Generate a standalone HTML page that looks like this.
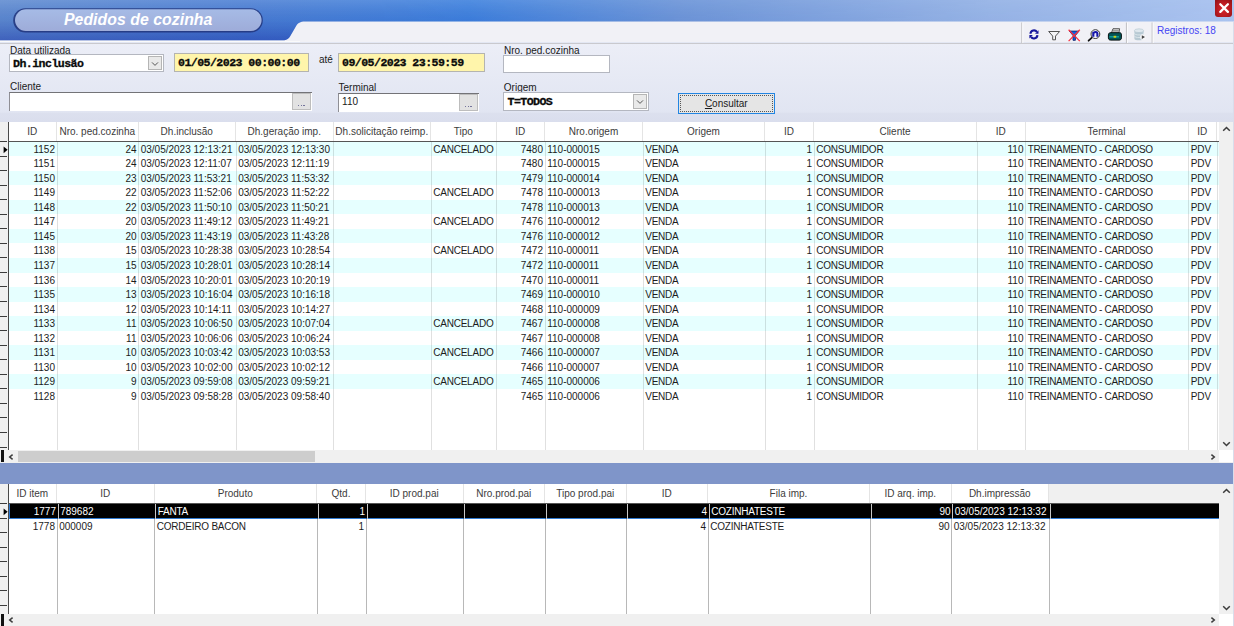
<!DOCTYPE html>
<html>
<head>
<meta charset="utf-8">
<title>Pedidos de cozinha</title>
<style>
*{box-sizing:border-box;margin:0;padding:0}
html,body{width:1234px;height:626px;overflow:hidden}
body{font-family:"Liberation Sans",sans-serif;font-size:10px;color:#222;background:#e3e7f3;position:relative}
.abs{position:absolute}
/* header */
#hdr{left:0;top:0;width:1234px;height:42px;overflow:hidden}
#title{left:64px;top:9.6px;font-size:15.8px;font-weight:bold;font-style:italic;color:#fff;white-space:nowrap;line-height:20px;letter-spacing:0.05px}
#closeb{left:1214.7px;top:0;width:17.8px;height:16.9px;background:radial-gradient(ellipse at 50% 55%,#d42228 0%,#c01c22 45%,#8e1217 100%);border-radius:0 0 3px 3px}
/* form */
#form{left:0;top:43px;width:1234px;height:79px;background:linear-gradient(#eceef7 0,#e1e5f2 69px,#dce0ee 70.5px,#dadeed 79px)}
.lbl{position:absolute;font-size:10px;line-height:11px;color:#1a1a1a;white-space:nowrap}
.inp{position:absolute;background:#fff;border:1px solid #c9ccd6;border-top:1.2px solid #6e6e72;border-left-color:#8c8c92}
.inp.cb{border:1px solid #b4b7c0}
.mono{font-family:"Liberation Mono",monospace;font-weight:bold;font-size:11.6px;letter-spacing:-0.56px;color:#0a0a0a;-webkit-text-stroke:0.3px #0a0a0a;white-space:nowrap;line-height:16px}
.inp.yel{background:#fff5ab;border:1px solid #b4b4b0}
.dd{position:absolute;right:1px;top:1px;bottom:1px;width:14px;background:#e9e9e9;border:1px solid #b5b5b5}
.dots{position:absolute;background:#e2e2e2;border:1px solid #bdbdbd}
.dots i{position:absolute;left:4.6px;top:10.6px;width:7px;height:1.2px;background:repeating-linear-gradient(90deg,#74749c 0,#74749c 1.5px,transparent 1.5px,transparent 2.75px)}
.inp.sk{border:none;border-top:1.1px solid #737377;border-left:1px solid #8f8f95}
/* grids */
.grid{position:absolute;left:0;width:1234px;background:#fff;overflow:hidden}
.ghead{position:absolute;left:0;top:0;height:20px;width:1219px;background:#fff;border-bottom:1px solid #555}
.hc{position:absolute;top:0;height:19px;line-height:19px;text-align:center;color:#3c3c3c;font-size:10px;white-space:nowrap;border-right:1px solid #e4e4e4;overflow:hidden}
.row{position:absolute;left:8.5px;width:1210.5px;height:14.55px;white-space:nowrap}
.row.c{background:#e6ffff}
.cell{position:absolute;top:0;height:14.55px;line-height:15.7px;font-size:10px;color:#1c1c1c;overflow:hidden;white-space:nowrap}
.r{text-align:right;padding-right:2px}
.l{text-align:left;padding-left:2.2px}
.vl{position:absolute;width:1.2px;background:rgba(0,0,0,0.10)}
.ind{position:absolute;left:0;width:8.6px;background:#f0f0f0;border-right:1.6px solid #4a4a4a}
.tick{position:absolute;left:0;width:7px;height:1px;background:#3c3c3c}
.hsb{position:absolute;left:0;height:12.4px;width:1234px;background:#f0f0f0}
.vsb{position:absolute;left:1219px;width:15px;background:#f0f0f0}
#btn{background:#e5e5e5;border:1.8px solid #2285e2}
</style>
</head>
<body>
<!-- HEADER -->
<div id="hdr" class="abs">
<svg width="1234" height="42" viewBox="0 0 1234 42" style="position:absolute;left:0;top:0">
 <defs>
  <linearGradient id="gh" x1="0" x2="1" y1="0" y2="0">
   <stop offset="0" stop-color="#5f8bd0"/>
   <stop offset="0.2" stop-color="#4c7fd4"/>
   <stop offset="0.38" stop-color="#3f82de"/>
   <stop offset="0.55" stop-color="#6f97d9"/>
   <stop offset="0.8" stop-color="#98b5e7"/>
   <stop offset="1" stop-color="#acc5f0"/>
  </linearGradient>
  <linearGradient id="gv" x1="0" x2="0" y1="0" y2="1">
   <stop offset="0" stop-color="#ffffff" stop-opacity="0.12"/>
   <stop offset="0.5" stop-color="#1030a0" stop-opacity="0.08"/>
   <stop offset="1" stop-color="#1428a0" stop-opacity="0.42"/>
  </linearGradient>
  <linearGradient id="gm" x1="0" x2="1" y1="0" y2="0">
   <stop offset="0" stop-color="#fff" stop-opacity="1"/>
   <stop offset="0.3" stop-color="#fff" stop-opacity="1"/>
   <stop offset="0.6" stop-color="#fff" stop-opacity="0.45"/>
   <stop offset="1" stop-color="#fff" stop-opacity="0.12"/>
  </linearGradient>
  <mask id="mk"><rect x="0" y="0" width="1234" height="42" fill="url(#gm)"/></mask>
  <linearGradient id="gp" x1="0" x2="0" y1="0" y2="1">
   <stop offset="0" stop-color="#a6bbe6"/>
   <stop offset="1" stop-color="#9eacd9"/>
  </linearGradient>
 </defs>
 <rect x="0" y="0" width="1234" height="42" fill="#f1f1f6"/>
 <path d="M0 0H1234V21.5H305C300 21.5 298 23 296 26.2L290 36.4C288.2 39.4 286 40.3 281 40.3H0Z" fill="url(#gh)"/>
 <path d="M0 0H1234V21.5H305C300 21.5 298 23 296 26.2L290 36.4C288.2 39.4 286 40.3 281 40.3H0Z" fill="url(#gv)" mask="url(#mk)"/>
 <rect x="0" y="41" width="300" height="1" fill="#fafafa"/>
 <!-- pill -->
 <filter id="bl" x="-5%" y="-20%" width="110%" height="140%"><feGaussianBlur stdDeviation="0.7"/></filter>
 <rect x="13.2" y="8.2" width="249.6" height="24.2" rx="12" fill="#22357c" opacity="0.85" filter="url(#bl)"/>
 <rect x="15" y="9.2" width="246.6" height="21.8" rx="10.9" fill="url(#gp)"/>
</svg>
<div id="title" class="abs">Pedidos de cozinha</div>
<div id="closeb" class="abs">
 <svg width="18" height="17" viewBox="0 0 18 17"><path d="M5.3 4.3L12.9 11.9M12.9 4.3L5.3 11.9" stroke="#fff" stroke-width="2.3" stroke-linecap="round"/></svg>
</div>
</div>
<!-- TOOLBAR -->
<div class="abs" id="tb" style="left:1010px;top:21.5px;width:224px;height:22px">
<svg width="224" height="22" viewBox="1010 21.5 224 22" style="position:absolute;left:0;top:0">
 <!-- separators -->
 <rect x="1021.2" y="22" width="1.1" height="20.5" fill="#c4c4c8"/><rect x="1022.3" y="22" width="1" height="20.5" fill="#fbfbfd"/>
 <rect x="1125.9" y="22" width="1.1" height="20.5" fill="#c4c4c8"/><rect x="1127" y="22" width="1" height="20.5" fill="#fbfbfd"/>
 <rect x="1151.6" y="22" width="1.1" height="20.5" fill="#c4c4c8"/><rect x="1152.7" y="22" width="1" height="20.5" fill="#fbfbfd"/>
 <!-- refresh -->
 <g fill="none" stroke="#17179c" stroke-width="2.1">
  <path d="M1030.5 33.2A3.5 3.5 0 0 1 1036.9 31.4"/>
  <path d="M1037.4 34.6A3.5 3.5 0 0 1 1031 36.4"/>
 </g>
 <path d="M1038.5 29.8V33.3H1035Z" fill="#17179c"/>
 <path d="M1029.4 38V34.5H1032.9Z" fill="#17179c"/>
 <!-- funnel -->
 <path d="M1048.7 31H1059.6L1055.5 35.6V39.3H1052.7V35.6Z" fill="#f4f4f6" stroke="#4a4a4a" stroke-width="0.95" stroke-linejoin="round"/>
 <!-- filter X -->
 <path d="M1069.4 30.6H1079L1075.4 35V39.8H1073V35Z" fill="#0a62e6" stroke="#1a2a70" stroke-width="0.9"/>
 <path d="M1068.6 29.2L1079.8 40.6M1079.8 29.2L1068.6 40.6" stroke="#f83040" stroke-width="1.25"/>
 <!-- magnifier -->
 <path d="M1092.2 36.8L1088.6 40.2" stroke="#111" stroke-width="1.8" stroke-linecap="round"/>
 <circle cx="1095.4" cy="33.6" r="4.4" fill="#fff" stroke="#333" stroke-width="1"/>
 <circle cx="1095.4" cy="33.6" r="3.4" fill="#e8e8ff" stroke="none"/>
 <path d="M1093.3 36.2V31.4M1093.3 33C1094 31.2 1097.4 30.8 1097.4 33.2V36.2" fill="none" stroke="#1616a8" stroke-width="2.1"/>
 <!-- printer -->
 <path d="M1111.2 33L1113 28.2H1119.6L1118.8 33Z" fill="#d6d6d6" stroke="#333" stroke-width="0.8"/>
 <path d="M1112.8 30H1118.6M1112.4 31.4H1118.2" stroke="#777" stroke-width="0.6"/>
 <path d="M1108.4 34.4C1108.4 32.6 1109.6 32.2 1111 32.2H1119.6C1121 32.2 1121.4 33 1121.4 34.4V37.4C1121.4 38.8 1120.6 39.6 1119 39.6H1110.8C1109.2 39.6 1108.4 38.8 1108.4 37.4Z" fill="#035456" stroke="#061212" stroke-width="1"/>
 <rect x="1109.4" y="35.6" width="9.6" height="1.4" fill="#10a0a0"/>
 <rect x="1113.6" y="35.3" width="2.6" height="1.9" fill="#d8d010"/>
 <!-- db -->
 <g>
  <path d="M1134.4 30.2V38.2C1134.4 40.4 1143.6 40.4 1143.6 38.2V30.2Z" fill="#b7c9d3"/>
  <ellipse cx="1139" cy="30.2" rx="4.6" ry="1.9" fill="#dfe8ee" stroke="#a9bcc8" stroke-width="0.5"/>
  <path d="M1134.4 32.8C1134.4 35 1143.6 35 1143.6 32.8M1134.4 35.4C1134.4 37.6 1143.6 37.6 1143.6 35.4" fill="none" stroke="#dce6ec" stroke-width="0.9"/>
  <circle cx="1143" cy="36.6" r="2.9" fill="#f6f6f8"/>
  <path d="M1141.8 34.8L1145 36.6L1141.8 38.4Z" fill="#444"/>
 </g>
</svg>
<div class="abs" style="left:147px;top:3.2px;font-size:10px;line-height:12px;color:#4646f4;white-space:nowrap">Registros: 18</div>
</div>
<!-- FORM -->
<div id="form" class="abs"></div>
<div class="abs" style="left:0;top:42.5px;width:1234px;height:1.4px;background:#c9c9ce"></div>

<div class="lbl" style="left:10px;top:44.6px">Data utilizada</div>
<div class="inp cb" style="left:9px;top:54.2px;width:154.7px;height:18.2px"><div class="mono" style="position:absolute;left:3px;top:0.9px">Dh.inclusão</div><div class="dd"><svg width="12" height="14" viewBox="0 0 12 14" style="position:absolute;left:0;top:0"><path d="M3 5.4L6 8.4L9 5.4" fill="none" stroke="#555" stroke-width="1"/></svg></div></div>
<div class="inp yel" style="left:173.8px;top:53.4px;width:135.2px;height:18.2px"><div class="mono" style="position:absolute;left:3.2px;top:0.2px">01/05/2023 00:00:00</div></div>
<div class="lbl" style="left:319px;top:53.6px">até</div>
<div class="inp yel" style="left:338px;top:53.4px;width:146.8px;height:18.2px"><div class="mono" style="position:absolute;left:3px;top:0.3px">09/05/2023 23:59:59</div></div>
<div class="lbl" style="left:504px;top:44.8px">Nro. ped.cozinha</div>
<div class="inp cb" style="left:502.7px;top:55.4px;width:107.2px;height:18px"></div>
<div class="lbl" style="left:10px;top:81px">Cliente</div>
<div class="inp sk" style="left:9px;top:92.4px;width:303.1px;height:18.6px"><div class="dots" style="left:282.3px;top:0.1px;width:18.6px;height:16.3px"><i></i></div></div>
<div class="lbl" style="left:338.5px;top:82.4px">Terminal</div>
<div class="inp sk" style="left:338.1px;top:93.1px;width:141.3px;height:18.8px"><div class="lbl" style="left:3px;top:1.6px">110</div><div class="dots" style="left:120.1px;top:0.3px;width:18.8px;height:16.3px"><i></i></div></div>
<div class="lbl" style="left:503.8px;top:81.8px">Origem</div>
<div class="inp cb" style="left:502.7px;top:92.4px;width:146.6px;height:18.2px"><div class="mono" style="position:absolute;left:3.8px;top:0.2px">T=TODOS</div><div class="dd"><svg width="12" height="14" viewBox="0 0 12 14" style="position:absolute;left:0;top:0"><path d="M3 5.4L6 8.4L9 5.4" fill="none" stroke="#555" stroke-width="1"/></svg></div></div>
<div class="abs" id="btn" style="left:677.6px;top:92.8px;width:97.4px;height:20.8px"><div class="abs" style="left:1px;top:1px;right:1px;bottom:1px;border:1px dotted rgba(0,0,0,0.62)"></div><div class="abs" style="left:0;top:3.9px;width:100%;text-align:center;font-size:10px;line-height:11px;color:#1a1a1a"><u>C</u>onsultar</div></div>

<div class="grid" style="top:121.6px;height:341.0px">
<div class="row c" style="top:20.00px">
<div class="cell r" style="left:0.0px;width:48.5px">1152</div>
<div class="cell r" style="left:48.5px;width:81.5px">24</div>
<div class="cell l" style="left:130.0px;width:97.5px">03/05/2023 12:13:21</div>
<div class="cell l" style="left:227.5px;width:97.5px">03/05/2023 12:13:30</div>
<div class="cell l" style="left:422.5px;width:65.5px;letter-spacing:-0.22px">CANCELADO</div>
<div class="cell r" style="left:488.0px;width:48.5px">7480</div>
<div class="cell l" style="left:536.5px;width:98px">110-000015</div>
<div class="cell l" style="left:634.5px;width:122px;letter-spacing:-0.22px">VENDA</div>
<div class="cell r" style="left:756.5px;width:49px">1</div>
<div class="cell l" style="left:805.5px;width:163px;letter-spacing:-0.22px">CONSUMIDOR</div>
<div class="cell r" style="left:968.5px;width:48.5px">110</div>
<div class="cell l" style="left:1017.0px;width:163.0px;letter-spacing:-0.33px">TREINAMENTO - CARDOSO</div>
<div class="cell l" style="left:1180.0px;width:28.5px">PDV</div>
</div>
<div class="row" style="top:34.55px">
<div class="cell r" style="left:0.0px;width:48.5px">1151</div>
<div class="cell r" style="left:48.5px;width:81.5px">24</div>
<div class="cell l" style="left:130.0px;width:97.5px">03/05/2023 12:11:07</div>
<div class="cell l" style="left:227.5px;width:97.5px">03/05/2023 12:11:19</div>
<div class="cell r" style="left:488.0px;width:48.5px">7480</div>
<div class="cell l" style="left:536.5px;width:98px">110-000015</div>
<div class="cell l" style="left:634.5px;width:122px;letter-spacing:-0.22px">VENDA</div>
<div class="cell r" style="left:756.5px;width:49px">1</div>
<div class="cell l" style="left:805.5px;width:163px;letter-spacing:-0.22px">CONSUMIDOR</div>
<div class="cell r" style="left:968.5px;width:48.5px">110</div>
<div class="cell l" style="left:1017.0px;width:163.0px;letter-spacing:-0.33px">TREINAMENTO - CARDOSO</div>
<div class="cell l" style="left:1180.0px;width:28.5px">PDV</div>
</div>
<div class="row c" style="top:49.10px">
<div class="cell r" style="left:0.0px;width:48.5px">1150</div>
<div class="cell r" style="left:48.5px;width:81.5px">23</div>
<div class="cell l" style="left:130.0px;width:97.5px">03/05/2023 11:53:21</div>
<div class="cell l" style="left:227.5px;width:97.5px">03/05/2023 11:53:32</div>
<div class="cell r" style="left:488.0px;width:48.5px">7479</div>
<div class="cell l" style="left:536.5px;width:98px">110-000014</div>
<div class="cell l" style="left:634.5px;width:122px;letter-spacing:-0.22px">VENDA</div>
<div class="cell r" style="left:756.5px;width:49px">1</div>
<div class="cell l" style="left:805.5px;width:163px;letter-spacing:-0.22px">CONSUMIDOR</div>
<div class="cell r" style="left:968.5px;width:48.5px">110</div>
<div class="cell l" style="left:1017.0px;width:163.0px;letter-spacing:-0.33px">TREINAMENTO - CARDOSO</div>
<div class="cell l" style="left:1180.0px;width:28.5px">PDV</div>
</div>
<div class="row" style="top:63.65px">
<div class="cell r" style="left:0.0px;width:48.5px">1149</div>
<div class="cell r" style="left:48.5px;width:81.5px">22</div>
<div class="cell l" style="left:130.0px;width:97.5px">03/05/2023 11:52:06</div>
<div class="cell l" style="left:227.5px;width:97.5px">03/05/2023 11:52:22</div>
<div class="cell l" style="left:422.5px;width:65.5px;letter-spacing:-0.22px">CANCELADO</div>
<div class="cell r" style="left:488.0px;width:48.5px">7478</div>
<div class="cell l" style="left:536.5px;width:98px">110-000013</div>
<div class="cell l" style="left:634.5px;width:122px;letter-spacing:-0.22px">VENDA</div>
<div class="cell r" style="left:756.5px;width:49px">1</div>
<div class="cell l" style="left:805.5px;width:163px;letter-spacing:-0.22px">CONSUMIDOR</div>
<div class="cell r" style="left:968.5px;width:48.5px">110</div>
<div class="cell l" style="left:1017.0px;width:163.0px;letter-spacing:-0.33px">TREINAMENTO - CARDOSO</div>
<div class="cell l" style="left:1180.0px;width:28.5px">PDV</div>
</div>
<div class="row c" style="top:78.20px">
<div class="cell r" style="left:0.0px;width:48.5px">1148</div>
<div class="cell r" style="left:48.5px;width:81.5px">22</div>
<div class="cell l" style="left:130.0px;width:97.5px">03/05/2023 11:50:10</div>
<div class="cell l" style="left:227.5px;width:97.5px">03/05/2023 11:50:21</div>
<div class="cell r" style="left:488.0px;width:48.5px">7478</div>
<div class="cell l" style="left:536.5px;width:98px">110-000013</div>
<div class="cell l" style="left:634.5px;width:122px;letter-spacing:-0.22px">VENDA</div>
<div class="cell r" style="left:756.5px;width:49px">1</div>
<div class="cell l" style="left:805.5px;width:163px;letter-spacing:-0.22px">CONSUMIDOR</div>
<div class="cell r" style="left:968.5px;width:48.5px">110</div>
<div class="cell l" style="left:1017.0px;width:163.0px;letter-spacing:-0.33px">TREINAMENTO - CARDOSO</div>
<div class="cell l" style="left:1180.0px;width:28.5px">PDV</div>
</div>
<div class="row" style="top:92.75px">
<div class="cell r" style="left:0.0px;width:48.5px">1147</div>
<div class="cell r" style="left:48.5px;width:81.5px">20</div>
<div class="cell l" style="left:130.0px;width:97.5px">03/05/2023 11:49:12</div>
<div class="cell l" style="left:227.5px;width:97.5px">03/05/2023 11:49:21</div>
<div class="cell l" style="left:422.5px;width:65.5px;letter-spacing:-0.22px">CANCELADO</div>
<div class="cell r" style="left:488.0px;width:48.5px">7476</div>
<div class="cell l" style="left:536.5px;width:98px">110-000012</div>
<div class="cell l" style="left:634.5px;width:122px;letter-spacing:-0.22px">VENDA</div>
<div class="cell r" style="left:756.5px;width:49px">1</div>
<div class="cell l" style="left:805.5px;width:163px;letter-spacing:-0.22px">CONSUMIDOR</div>
<div class="cell r" style="left:968.5px;width:48.5px">110</div>
<div class="cell l" style="left:1017.0px;width:163.0px;letter-spacing:-0.33px">TREINAMENTO - CARDOSO</div>
<div class="cell l" style="left:1180.0px;width:28.5px">PDV</div>
</div>
<div class="row c" style="top:107.30px">
<div class="cell r" style="left:0.0px;width:48.5px">1145</div>
<div class="cell r" style="left:48.5px;width:81.5px">20</div>
<div class="cell l" style="left:130.0px;width:97.5px">03/05/2023 11:43:19</div>
<div class="cell l" style="left:227.5px;width:97.5px">03/05/2023 11:43:28</div>
<div class="cell r" style="left:488.0px;width:48.5px">7476</div>
<div class="cell l" style="left:536.5px;width:98px">110-000012</div>
<div class="cell l" style="left:634.5px;width:122px;letter-spacing:-0.22px">VENDA</div>
<div class="cell r" style="left:756.5px;width:49px">1</div>
<div class="cell l" style="left:805.5px;width:163px;letter-spacing:-0.22px">CONSUMIDOR</div>
<div class="cell r" style="left:968.5px;width:48.5px">110</div>
<div class="cell l" style="left:1017.0px;width:163.0px;letter-spacing:-0.33px">TREINAMENTO - CARDOSO</div>
<div class="cell l" style="left:1180.0px;width:28.5px">PDV</div>
</div>
<div class="row" style="top:121.85px">
<div class="cell r" style="left:0.0px;width:48.5px">1138</div>
<div class="cell r" style="left:48.5px;width:81.5px">15</div>
<div class="cell l" style="left:130.0px;width:97.5px">03/05/2023 10:28:38</div>
<div class="cell l" style="left:227.5px;width:97.5px">03/05/2023 10:28:54</div>
<div class="cell l" style="left:422.5px;width:65.5px;letter-spacing:-0.22px">CANCELADO</div>
<div class="cell r" style="left:488.0px;width:48.5px">7472</div>
<div class="cell l" style="left:536.5px;width:98px">110-000011</div>
<div class="cell l" style="left:634.5px;width:122px;letter-spacing:-0.22px">VENDA</div>
<div class="cell r" style="left:756.5px;width:49px">1</div>
<div class="cell l" style="left:805.5px;width:163px;letter-spacing:-0.22px">CONSUMIDOR</div>
<div class="cell r" style="left:968.5px;width:48.5px">110</div>
<div class="cell l" style="left:1017.0px;width:163.0px;letter-spacing:-0.33px">TREINAMENTO - CARDOSO</div>
<div class="cell l" style="left:1180.0px;width:28.5px">PDV</div>
</div>
<div class="row c" style="top:136.40px">
<div class="cell r" style="left:0.0px;width:48.5px">1137</div>
<div class="cell r" style="left:48.5px;width:81.5px">15</div>
<div class="cell l" style="left:130.0px;width:97.5px">03/05/2023 10:28:01</div>
<div class="cell l" style="left:227.5px;width:97.5px">03/05/2023 10:28:14</div>
<div class="cell r" style="left:488.0px;width:48.5px">7472</div>
<div class="cell l" style="left:536.5px;width:98px">110-000011</div>
<div class="cell l" style="left:634.5px;width:122px;letter-spacing:-0.22px">VENDA</div>
<div class="cell r" style="left:756.5px;width:49px">1</div>
<div class="cell l" style="left:805.5px;width:163px;letter-spacing:-0.22px">CONSUMIDOR</div>
<div class="cell r" style="left:968.5px;width:48.5px">110</div>
<div class="cell l" style="left:1017.0px;width:163.0px;letter-spacing:-0.33px">TREINAMENTO - CARDOSO</div>
<div class="cell l" style="left:1180.0px;width:28.5px">PDV</div>
</div>
<div class="row" style="top:150.95px">
<div class="cell r" style="left:0.0px;width:48.5px">1136</div>
<div class="cell r" style="left:48.5px;width:81.5px">14</div>
<div class="cell l" style="left:130.0px;width:97.5px">03/05/2023 10:20:01</div>
<div class="cell l" style="left:227.5px;width:97.5px">03/05/2023 10:20:19</div>
<div class="cell r" style="left:488.0px;width:48.5px">7470</div>
<div class="cell l" style="left:536.5px;width:98px">110-000011</div>
<div class="cell l" style="left:634.5px;width:122px;letter-spacing:-0.22px">VENDA</div>
<div class="cell r" style="left:756.5px;width:49px">1</div>
<div class="cell l" style="left:805.5px;width:163px;letter-spacing:-0.22px">CONSUMIDOR</div>
<div class="cell r" style="left:968.5px;width:48.5px">110</div>
<div class="cell l" style="left:1017.0px;width:163.0px;letter-spacing:-0.33px">TREINAMENTO - CARDOSO</div>
<div class="cell l" style="left:1180.0px;width:28.5px">PDV</div>
</div>
<div class="row c" style="top:165.50px">
<div class="cell r" style="left:0.0px;width:48.5px">1135</div>
<div class="cell r" style="left:48.5px;width:81.5px">13</div>
<div class="cell l" style="left:130.0px;width:97.5px">03/05/2023 10:16:04</div>
<div class="cell l" style="left:227.5px;width:97.5px">03/05/2023 10:16:18</div>
<div class="cell r" style="left:488.0px;width:48.5px">7469</div>
<div class="cell l" style="left:536.5px;width:98px">110-000010</div>
<div class="cell l" style="left:634.5px;width:122px;letter-spacing:-0.22px">VENDA</div>
<div class="cell r" style="left:756.5px;width:49px">1</div>
<div class="cell l" style="left:805.5px;width:163px;letter-spacing:-0.22px">CONSUMIDOR</div>
<div class="cell r" style="left:968.5px;width:48.5px">110</div>
<div class="cell l" style="left:1017.0px;width:163.0px;letter-spacing:-0.33px">TREINAMENTO - CARDOSO</div>
<div class="cell l" style="left:1180.0px;width:28.5px">PDV</div>
</div>
<div class="row" style="top:180.05px">
<div class="cell r" style="left:0.0px;width:48.5px">1134</div>
<div class="cell r" style="left:48.5px;width:81.5px">12</div>
<div class="cell l" style="left:130.0px;width:97.5px">03/05/2023 10:14:11</div>
<div class="cell l" style="left:227.5px;width:97.5px">03/05/2023 10:14:27</div>
<div class="cell r" style="left:488.0px;width:48.5px">7468</div>
<div class="cell l" style="left:536.5px;width:98px">110-000009</div>
<div class="cell l" style="left:634.5px;width:122px;letter-spacing:-0.22px">VENDA</div>
<div class="cell r" style="left:756.5px;width:49px">1</div>
<div class="cell l" style="left:805.5px;width:163px;letter-spacing:-0.22px">CONSUMIDOR</div>
<div class="cell r" style="left:968.5px;width:48.5px">110</div>
<div class="cell l" style="left:1017.0px;width:163.0px;letter-spacing:-0.33px">TREINAMENTO - CARDOSO</div>
<div class="cell l" style="left:1180.0px;width:28.5px">PDV</div>
</div>
<div class="row c" style="top:194.60px">
<div class="cell r" style="left:0.0px;width:48.5px">1133</div>
<div class="cell r" style="left:48.5px;width:81.5px">11</div>
<div class="cell l" style="left:130.0px;width:97.5px">03/05/2023 10:06:50</div>
<div class="cell l" style="left:227.5px;width:97.5px">03/05/2023 10:07:04</div>
<div class="cell l" style="left:422.5px;width:65.5px;letter-spacing:-0.22px">CANCELADO</div>
<div class="cell r" style="left:488.0px;width:48.5px">7467</div>
<div class="cell l" style="left:536.5px;width:98px">110-000008</div>
<div class="cell l" style="left:634.5px;width:122px;letter-spacing:-0.22px">VENDA</div>
<div class="cell r" style="left:756.5px;width:49px">1</div>
<div class="cell l" style="left:805.5px;width:163px;letter-spacing:-0.22px">CONSUMIDOR</div>
<div class="cell r" style="left:968.5px;width:48.5px">110</div>
<div class="cell l" style="left:1017.0px;width:163.0px;letter-spacing:-0.33px">TREINAMENTO - CARDOSO</div>
<div class="cell l" style="left:1180.0px;width:28.5px">PDV</div>
</div>
<div class="row" style="top:209.15px">
<div class="cell r" style="left:0.0px;width:48.5px">1132</div>
<div class="cell r" style="left:48.5px;width:81.5px">11</div>
<div class="cell l" style="left:130.0px;width:97.5px">03/05/2023 10:06:06</div>
<div class="cell l" style="left:227.5px;width:97.5px">03/05/2023 10:06:24</div>
<div class="cell r" style="left:488.0px;width:48.5px">7467</div>
<div class="cell l" style="left:536.5px;width:98px">110-000008</div>
<div class="cell l" style="left:634.5px;width:122px;letter-spacing:-0.22px">VENDA</div>
<div class="cell r" style="left:756.5px;width:49px">1</div>
<div class="cell l" style="left:805.5px;width:163px;letter-spacing:-0.22px">CONSUMIDOR</div>
<div class="cell r" style="left:968.5px;width:48.5px">110</div>
<div class="cell l" style="left:1017.0px;width:163.0px;letter-spacing:-0.33px">TREINAMENTO - CARDOSO</div>
<div class="cell l" style="left:1180.0px;width:28.5px">PDV</div>
</div>
<div class="row c" style="top:223.70px">
<div class="cell r" style="left:0.0px;width:48.5px">1131</div>
<div class="cell r" style="left:48.5px;width:81.5px">10</div>
<div class="cell l" style="left:130.0px;width:97.5px">03/05/2023 10:03:42</div>
<div class="cell l" style="left:227.5px;width:97.5px">03/05/2023 10:03:53</div>
<div class="cell l" style="left:422.5px;width:65.5px;letter-spacing:-0.22px">CANCELADO</div>
<div class="cell r" style="left:488.0px;width:48.5px">7466</div>
<div class="cell l" style="left:536.5px;width:98px">110-000007</div>
<div class="cell l" style="left:634.5px;width:122px;letter-spacing:-0.22px">VENDA</div>
<div class="cell r" style="left:756.5px;width:49px">1</div>
<div class="cell l" style="left:805.5px;width:163px;letter-spacing:-0.22px">CONSUMIDOR</div>
<div class="cell r" style="left:968.5px;width:48.5px">110</div>
<div class="cell l" style="left:1017.0px;width:163.0px;letter-spacing:-0.33px">TREINAMENTO - CARDOSO</div>
<div class="cell l" style="left:1180.0px;width:28.5px">PDV</div>
</div>
<div class="row" style="top:238.25px">
<div class="cell r" style="left:0.0px;width:48.5px">1130</div>
<div class="cell r" style="left:48.5px;width:81.5px">10</div>
<div class="cell l" style="left:130.0px;width:97.5px">03/05/2023 10:02:00</div>
<div class="cell l" style="left:227.5px;width:97.5px">03/05/2023 10:02:12</div>
<div class="cell r" style="left:488.0px;width:48.5px">7466</div>
<div class="cell l" style="left:536.5px;width:98px">110-000007</div>
<div class="cell l" style="left:634.5px;width:122px;letter-spacing:-0.22px">VENDA</div>
<div class="cell r" style="left:756.5px;width:49px">1</div>
<div class="cell l" style="left:805.5px;width:163px;letter-spacing:-0.22px">CONSUMIDOR</div>
<div class="cell r" style="left:968.5px;width:48.5px">110</div>
<div class="cell l" style="left:1017.0px;width:163.0px;letter-spacing:-0.33px">TREINAMENTO - CARDOSO</div>
<div class="cell l" style="left:1180.0px;width:28.5px">PDV</div>
</div>
<div class="row c" style="top:252.80px">
<div class="cell r" style="left:0.0px;width:48.5px">1129</div>
<div class="cell r" style="left:48.5px;width:81.5px">9</div>
<div class="cell l" style="left:130.0px;width:97.5px">03/05/2023 09:59:08</div>
<div class="cell l" style="left:227.5px;width:97.5px">03/05/2023 09:59:21</div>
<div class="cell l" style="left:422.5px;width:65.5px;letter-spacing:-0.22px">CANCELADO</div>
<div class="cell r" style="left:488.0px;width:48.5px">7465</div>
<div class="cell l" style="left:536.5px;width:98px">110-000006</div>
<div class="cell l" style="left:634.5px;width:122px;letter-spacing:-0.22px">VENDA</div>
<div class="cell r" style="left:756.5px;width:49px">1</div>
<div class="cell l" style="left:805.5px;width:163px;letter-spacing:-0.22px">CONSUMIDOR</div>
<div class="cell r" style="left:968.5px;width:48.5px">110</div>
<div class="cell l" style="left:1017.0px;width:163.0px;letter-spacing:-0.33px">TREINAMENTO - CARDOSO</div>
<div class="cell l" style="left:1180.0px;width:28.5px">PDV</div>
</div>
<div class="row" style="top:267.35px">
<div class="cell r" style="left:0.0px;width:48.5px">1128</div>
<div class="cell r" style="left:48.5px;width:81.5px">9</div>
<div class="cell l" style="left:130.0px;width:97.5px">03/05/2023 09:58:28</div>
<div class="cell l" style="left:227.5px;width:97.5px">03/05/2023 09:58:40</div>
<div class="cell r" style="left:488.0px;width:48.5px">7465</div>
<div class="cell l" style="left:536.5px;width:98px">110-000006</div>
<div class="cell l" style="left:634.5px;width:122px;letter-spacing:-0.22px">VENDA</div>
<div class="cell r" style="left:756.5px;width:49px">1</div>
<div class="cell l" style="left:805.5px;width:163px;letter-spacing:-0.22px">CONSUMIDOR</div>
<div class="cell r" style="left:968.5px;width:48.5px">110</div>
<div class="cell l" style="left:1017.0px;width:163.0px;letter-spacing:-0.33px">TREINAMENTO - CARDOSO</div>
<div class="cell l" style="left:1180.0px;width:28.5px">PDV</div>
</div>
<div class="vl" style="left:56.7px;top:20px;height:308.6px;background:rgba(0,0,0,0.12)"></div>
<div class="vl" style="left:138.2px;top:20px;height:308.6px;background:rgba(0,0,0,0.12)"></div>
<div class="vl" style="left:235.7px;top:20px;height:308.6px;background:rgba(0,0,0,0.12)"></div>
<div class="vl" style="left:333.2px;top:20px;height:308.6px;background:rgba(0,0,0,0.12)"></div>
<div class="vl" style="left:430.7px;top:20px;height:308.6px;background:rgba(0,0,0,0.12)"></div>
<div class="vl" style="left:496.2px;top:20px;height:308.6px;background:rgba(0,0,0,0.12)"></div>
<div class="vl" style="left:544.7px;top:20px;height:308.6px;background:rgba(0,0,0,0.12)"></div>
<div class="vl" style="left:642.7px;top:20px;height:308.6px;background:rgba(0,0,0,0.12)"></div>
<div class="vl" style="left:764.7px;top:20px;height:308.6px;background:rgba(0,0,0,0.12)"></div>
<div class="vl" style="left:813.7px;top:20px;height:308.6px;background:rgba(0,0,0,0.12)"></div>
<div class="vl" style="left:976.7px;top:20px;height:308.6px;background:rgba(0,0,0,0.12)"></div>
<div class="vl" style="left:1025.2px;top:20px;height:308.6px;background:rgba(0,0,0,0.12)"></div>
<div class="vl" style="left:1188.2px;top:20px;height:308.6px;background:rgba(0,0,0,0.12)"></div>
<div class="vl" style="left:1216.7px;top:20px;height:308.6px;background:rgba(0,0,0,0.12)"></div>
<div class="ghead">
<div class="hc" style="left:8.5px;width:48.5px;padding-top:0px">ID</div>
<div class="hc" style="left:57px;width:81.5px;padding-top:0px">Nro. ped.cozinha</div>
<div class="hc" style="left:138.5px;width:97.5px;padding-top:0px">Dh.inclusão</div>
<div class="hc" style="left:236px;width:97.5px;padding-top:0px">Dh.geração imp.</div>
<div class="hc" style="left:333.5px;width:97.5px;padding-top:0px">Dh.solicitação reimp.</div>
<div class="hc" style="left:431px;width:65.5px;padding-top:0px">Tipo</div>
<div class="hc" style="left:496.5px;width:48.5px;padding-top:0px">ID</div>
<div class="hc" style="left:545px;width:98px;padding-top:0px">Nro.origem</div>
<div class="hc" style="left:643px;width:122px;padding-top:0px">Origem</div>
<div class="hc" style="left:765px;width:49px;padding-top:0px">ID</div>
<div class="hc" style="left:814px;width:163px;padding-top:0px">Cliente</div>
<div class="hc" style="left:977px;width:48.5px;padding-top:0px">ID</div>
<div class="hc" style="left:1025.5px;width:163.0px;padding-top:0px">Terminal</div>
<div class="hc" style="left:1188.5px;width:28.5px;padding-top:0px">ID</div>
</div>
<div class="ind" style="top:0;height:328.6px"></div>
<div class="tick" style="top:19.40px"></div>
<div class="tick" style="top:33.95px"></div>
<div class="tick" style="top:48.50px"></div>
<div class="tick" style="top:63.05px"></div>
<div class="tick" style="top:77.60px"></div>
<div class="tick" style="top:92.15px"></div>
<div class="tick" style="top:106.70px"></div>
<div class="tick" style="top:121.25px"></div>
<div class="tick" style="top:135.80px"></div>
<div class="tick" style="top:150.35px"></div>
<div class="tick" style="top:164.90px"></div>
<div class="tick" style="top:179.45px"></div>
<div class="tick" style="top:194.00px"></div>
<div class="tick" style="top:208.55px"></div>
<div class="tick" style="top:223.10px"></div>
<div class="tick" style="top:237.65px"></div>
<div class="tick" style="top:252.20px"></div>
<div class="tick" style="top:266.75px"></div>
<div class="tick" style="top:281.30px"></div>
<div class="tick" style="top:295.85px"></div>
<div class="tick" style="top:310.40px"></div>
<div class="tick" style="top:324.95px"></div>
<svg class="abs" style="left:2.6px;top:24.6px" width="6" height="8" viewBox="0 0 6 8"><path d="M0.6 0.4L4.6 3.8L0.6 7.2Z" fill="#000"/></svg>
<div class="vsb" style="top:0;height:328.6px"><svg class="abs" style="left:3px;top:4px" width="9" height="6" viewBox="0 0 9 6"><path d="M1.2 4.8L4.5 1.5L7.8 4.8" fill="none" stroke="#3c3c3c" stroke-width="1.5"/></svg><svg class="abs" style="left:3px;bottom:3px" width="9" height="6" viewBox="0 0 9 6"><path d="M1.2 1.2L4.5 4.5L7.8 1.2" fill="none" stroke="#3c3c3c" stroke-width="1.5"/></svg></div>
<div class="hsb" style="top:328.6px"><div class="abs" style="left:1.2px;top:0;width:3.2px;height:12px;background:#111"></div>
<div class="abs" style="left:17.5px;top:0.6px;width:297.5px;height:11.4px;background:#cdcdcd"></div>
<svg class="abs" style="left:8.4px;top:2.4px" width="6" height="8" viewBox="0 0 6 8"><path d="M4.6 1.6L1.7 4L4.6 6.4" fill="none" stroke="#3c3c3c" stroke-width="1.5"/></svg>
<svg class="abs" style="left:1210px;top:2.4px" width="6" height="8" viewBox="0 0 6 8"><path d="M1.4 1.6L4.3 4L1.4 6.4" fill="none" stroke="#3c3c3c" stroke-width="1.5"/></svg>
<div class="abs" style="left:1219px;top:0;width:15px;height:12px;background:#fff"></div>
</div>
</div>
<div class="abs" style="left:0;top:463.4px;width:1234px;height:20.3px;background:#7f95c9"></div>
<div class="grid" style="top:483.6px;height:142.39999999999998px">
<div class="row" style="top:20.50px;background:#000;color:#fff;border-bottom:1.2px solid #2f7ad0;border-left:1px solid #2f7ad0">
<div class="cell r" style="left:0.0px;width:48.5px;color:#fff">1777</div>
<div class="cell l" style="left:48.5px;width:97.5px;color:#fff">789682</div>
<div class="cell l" style="left:146.0px;width:162.5px;color:#fff;letter-spacing:-0.22px">FANTA</div>
<div class="cell r" style="left:308.5px;width:49px;color:#fff">1</div>
<div class="cell r" style="left:618.0px;width:81.5px;color:#fff">4</div>
<div class="cell l" style="left:699.5px;width:162px;color:#fff;letter-spacing:-0.22px">COZINHATESTE</div>
<div class="cell r" style="left:861.5px;width:81.5px;color:#fff">90</div>
<div class="cell l" style="left:943.0px;width:97.5px;color:#fff">03/05/2023 12:13:32</div>
<div class="vl" style="left:48px;top:0;height:14.55px;background:#c8c8c8"></div>
<div class="vl" style="left:145.5px;top:0;height:14.55px;background:#c8c8c8"></div>
<div class="vl" style="left:308px;top:0;height:14.55px;background:#c8c8c8"></div>
<div class="vl" style="left:357px;top:0;height:14.55px;background:#c8c8c8"></div>
<div class="vl" style="left:454.5px;top:0;height:14.55px;background:#c8c8c8"></div>
<div class="vl" style="left:536px;top:0;height:14.55px;background:#c8c8c8"></div>
<div class="vl" style="left:617.5px;top:0;height:14.55px;background:#c8c8c8"></div>
<div class="vl" style="left:699px;top:0;height:14.55px;background:#c8c8c8"></div>
<div class="vl" style="left:861px;top:0;height:14.55px;background:#c8c8c8"></div>
<div class="vl" style="left:942.5px;top:0;height:14.55px;background:#c8c8c8"></div>
<div class="vl" style="left:1040px;top:0;height:14.55px;background:#c8c8c8"></div>
</div>
<div class="row" style="top:35.05px">
<div class="cell r" style="left:0.0px;width:48.5px">1778</div>
<div class="cell l" style="left:48.5px;width:97.5px">000009</div>
<div class="cell l" style="left:146.0px;width:162.5px;letter-spacing:-0.22px">CORDEIRO BACON</div>
<div class="cell r" style="left:308.5px;width:49px">1</div>
<div class="cell r" style="left:618.0px;width:81.5px">4</div>
<div class="cell l" style="left:699.5px;width:162px;letter-spacing:-0.22px">COZINHATESTE</div>
<div class="cell r" style="left:861.5px;width:81.5px">90</div>
<div class="cell l" style="left:943.0px;width:97.5px">03/05/2023 12:13:32</div>
</div>
<div class="vl" style="left:56.7px;top:20px;height:109.99999999999997px;background:rgba(0,0,0,0.28)"></div>
<div class="vl" style="left:154.2px;top:20px;height:109.99999999999997px;background:rgba(0,0,0,0.28)"></div>
<div class="vl" style="left:316.7px;top:20px;height:109.99999999999997px;background:rgba(0,0,0,0.28)"></div>
<div class="vl" style="left:365.7px;top:20px;height:109.99999999999997px;background:rgba(0,0,0,0.28)"></div>
<div class="vl" style="left:463.2px;top:20px;height:109.99999999999997px;background:rgba(0,0,0,0.28)"></div>
<div class="vl" style="left:544.7px;top:20px;height:109.99999999999997px;background:rgba(0,0,0,0.28)"></div>
<div class="vl" style="left:626.2px;top:20px;height:109.99999999999997px;background:rgba(0,0,0,0.28)"></div>
<div class="vl" style="left:707.7px;top:20px;height:109.99999999999997px;background:rgba(0,0,0,0.28)"></div>
<div class="vl" style="left:869.7px;top:20px;height:109.99999999999997px;background:rgba(0,0,0,0.28)"></div>
<div class="vl" style="left:951.2px;top:20px;height:109.99999999999997px;background:rgba(0,0,0,0.28)"></div>
<div class="vl" style="left:1048.7px;top:20px;height:109.99999999999997px;background:rgba(0,0,0,0.28)"></div>
<div class="ghead">
<div class="hc" style="left:8.5px;width:48.5px;padding-top:0.9px">ID item</div>
<div class="hc" style="left:57px;width:97.5px;padding-top:0.9px">ID</div>
<div class="hc" style="left:154.5px;width:162.5px;padding-top:0.9px">Produto</div>
<div class="hc" style="left:317px;width:49px;padding-top:0.9px">Qtd.</div>
<div class="hc" style="left:366px;width:97.5px;padding-top:0.9px">ID prod.pai</div>
<div class="hc" style="left:463.5px;width:81.5px;padding-top:0.9px">Nro.prod.pai</div>
<div class="hc" style="left:545px;width:81.5px;padding-top:0.9px">Tipo prod.pai</div>
<div class="hc" style="left:626.5px;width:81.5px;padding-top:0.9px">ID</div>
<div class="hc" style="left:708px;width:162px;padding-top:0.9px">Fila imp.</div>
<div class="hc" style="left:870px;width:81.5px;padding-top:0.9px">ID arq. imp.</div>
<div class="hc" style="left:951.5px;width:97.5px;padding-top:0.9px">Dh.impressão</div>
<div class="abs" style="left:1049px;top:0;width:170px;height:19px;background:#f0f0f0"></div>
</div>
<div class="ind" style="top:0;height:129.99999999999997px"></div>
<div class="tick" style="top:19.40px"></div>
<div class="tick" style="top:33.95px"></div>
<div class="tick" style="top:48.50px"></div>
<div class="tick" style="top:63.05px"></div>
<div class="tick" style="top:77.60px"></div>
<div class="tick" style="top:92.15px"></div>
<div class="tick" style="top:106.70px"></div>
<div class="tick" style="top:121.25px"></div>
<div class="tick" style="top:135.80px"></div>
<svg class="abs" style="left:2.6px;top:24.6px" width="6" height="8" viewBox="0 0 6 8"><path d="M0.6 0.4L4.6 3.8L0.6 7.2Z" fill="#000"/></svg>
<div class="vsb" style="top:0;height:129.99999999999997px"><svg class="abs" style="left:3px;top:4px" width="9" height="6" viewBox="0 0 9 6"><path d="M1.2 4.8L4.5 1.5L7.8 4.8" fill="none" stroke="#3c3c3c" stroke-width="1.5"/></svg><svg class="abs" style="left:3px;bottom:3px" width="9" height="6" viewBox="0 0 9 6"><path d="M1.2 1.2L4.5 4.5L7.8 1.2" fill="none" stroke="#3c3c3c" stroke-width="1.5"/></svg></div>
<div class="hsb" style="top:129.99999999999997px"><div class="abs" style="left:1.2px;top:0;width:3.2px;height:12px;background:#111"></div>
<svg class="abs" style="left:8.4px;top:2.4px" width="6" height="8" viewBox="0 0 6 8"><path d="M4.6 1.6L1.7 4L4.6 6.4" fill="none" stroke="#3c3c3c" stroke-width="1.5"/></svg>
<svg class="abs" style="left:1210px;top:2.4px" width="6" height="8" viewBox="0 0 6 8"><path d="M1.4 1.6L4.3 4L1.4 6.4" fill="none" stroke="#3c3c3c" stroke-width="1.5"/></svg>
<div class="abs" style="left:1219px;top:0;width:15px;height:12px;background:#fff"></div>
</div>
</div>
<div class="abs" style="left:1233px;top:22px;width:1px;height:604px;background:#d9ddeb"></div>
</body>
</html>
